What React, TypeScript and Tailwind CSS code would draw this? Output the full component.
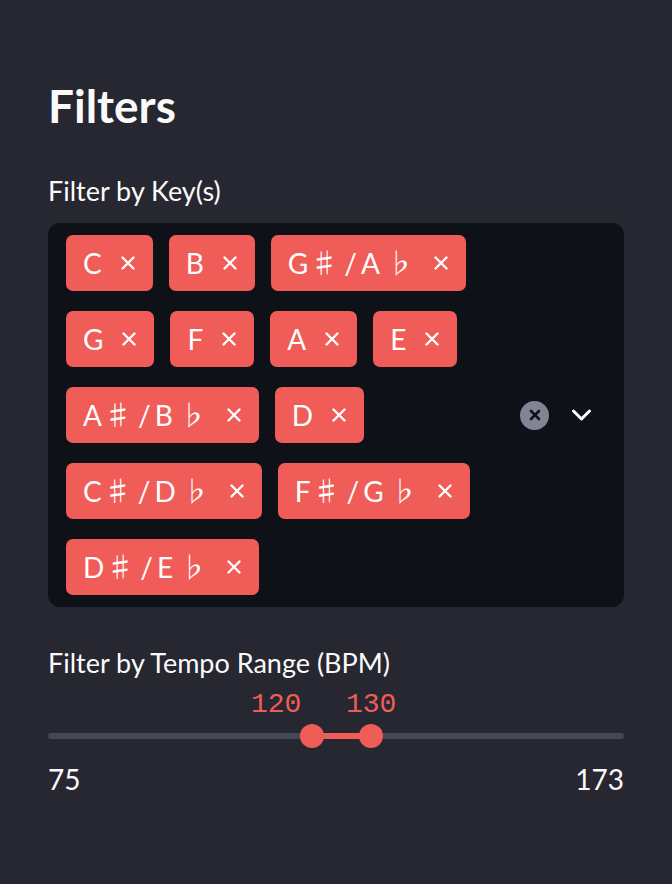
import React from 'react';

const SANS = "font-['Lato','Noto_Sans_CJK_JP',sans-serif]";

// [natural, enharmonic] pairs; single notes have no second entry
const keys: [string, string?][] = [
  ['C'], ['B'], ['G', 'A'], ['G'], ['F'], ['A'], ['E'], ['A', 'B'], ['D'], ['C', 'D'], ['F', 'G'], ['D', 'E'],
];

const MIN = 75;
const MAX = 173;
const low = 120;
const high = 130;

const XIcon = () => (
  <svg width="16" height="16" viewBox="0 0 16 16" fill="none" stroke="white" strokeWidth="2.4" strokeLinecap="round">
    <path d="M2.5 2.5 L13.5 13.5 M13.5 2.5 L2.5 13.5" />
  </svg>
);

const KeyTag = ({ note, alt }: { note: string; alt?: string }) => (
  <div className="flex h-[56px] items-center gap-[18px] rounded-[7px] bg-[#f05c57] pl-[17px] pr-[17px] text-[28px] leading-none text-white">
    {alt ? (
      <span className="flex items-center">
        <span>{note}</span>
        <span className="ml-[2px] mr-[6px]">♯</span>
        <span className="mr-[4px]">/</span>
        <span>{alt}</span>
        <span className="ml-[6px] mr-[1px]">♭</span>
      </span>
    ) : (
      <span>{note}</span>
    )}
    <XIcon />
  </div>
);

const App = () => {
  const lowPct = ((low - MIN) / (MAX - MIN)) * 100;
  const highPct = ((high - MIN) / (MAX - MIN)) * 100;

  return (
    <div className={`min-h-screen bg-[#262730] px-12 pt-[79px] text-[#fafafa] ${SANS}`}>
      <h2 className="text-[46px] font-bold leading-[54px]">Filters</h2>

      {/* key multiselect */}
      <div className="mt-[42px] text-[27px] leading-[32px]">Filter by Key(s)</div>
      <div className="mt-4 flex items-center rounded-xl bg-[#0e1117]">
        <div className="flex flex-1 flex-wrap gap-x-4 gap-y-5 py-3 pl-[18px]">
          {keys.map(([n, a], i) => (
            <KeyTag key={i} note={n} alt={a} />
          ))}
        </div>
        <div className="flex items-center gap-[22px] pl-[14px] pr-8">
          <div className="flex h-[29px] w-[29px] items-center justify-center rounded-full bg-[#808495]">
            <svg width="12" height="12" viewBox="0 0 12 12" fill="none" stroke="#0e1117" strokeWidth="2.6" strokeLinecap="round">
              <path d="M2 2 L10 10 M10 2 L2 10" />
            </svg>
          </div>
          <svg width="21" height="12" viewBox="0 0 21 12" fill="none" stroke="white" strokeWidth="3" strokeLinecap="round" strokeLinejoin="round">
            <path d="M2.5 2 L10.5 10 L18.5 2" />
          </svg>
        </div>
      </div>

      {/* tempo slider */}
      <div className="mt-10 text-[27px] leading-[32px]">Filter by Tempo Range (BPM)</div>
      <div className="relative pt-[54px]">
        <div className="absolute left-[203px] top-[10px] font-['Liberation_Mono',monospace] text-[28px] leading-[32px] text-[#f05c57]">
          {low}
        </div>
        <div className="absolute left-[298px] top-[10px] font-['Liberation_Mono',monospace] text-[28px] leading-[32px] text-[#f05c57]">
          {high}
        </div>
        <div className="relative h-[6px] rounded-full bg-[#474952]">
          <div
            className="absolute top-0 h-[6px] bg-[#f05c57]"
            style={{ left: `${lowPct}%`, width: `${highPct - lowPct}%` }}
          />
          <div
            className="absolute top-[-9px] h-6 w-6 -translate-x-1/2 rounded-full bg-[#f05c57]"
            style={{ left: `${lowPct}%` }}
          />
          <div
            className="absolute top-[-9px] h-6 w-6 -translate-x-1/2 rounded-full bg-[#f05c57]"
            style={{ left: `${highPct}%` }}
          />
        </div>
        <div className="mt-[23px] flex justify-between text-[28px] leading-[34px]">
          <span>{MIN}</span>
          <span>{MAX}</span>
        </div>
      </div>
    </div>
  );
};

export default App;
